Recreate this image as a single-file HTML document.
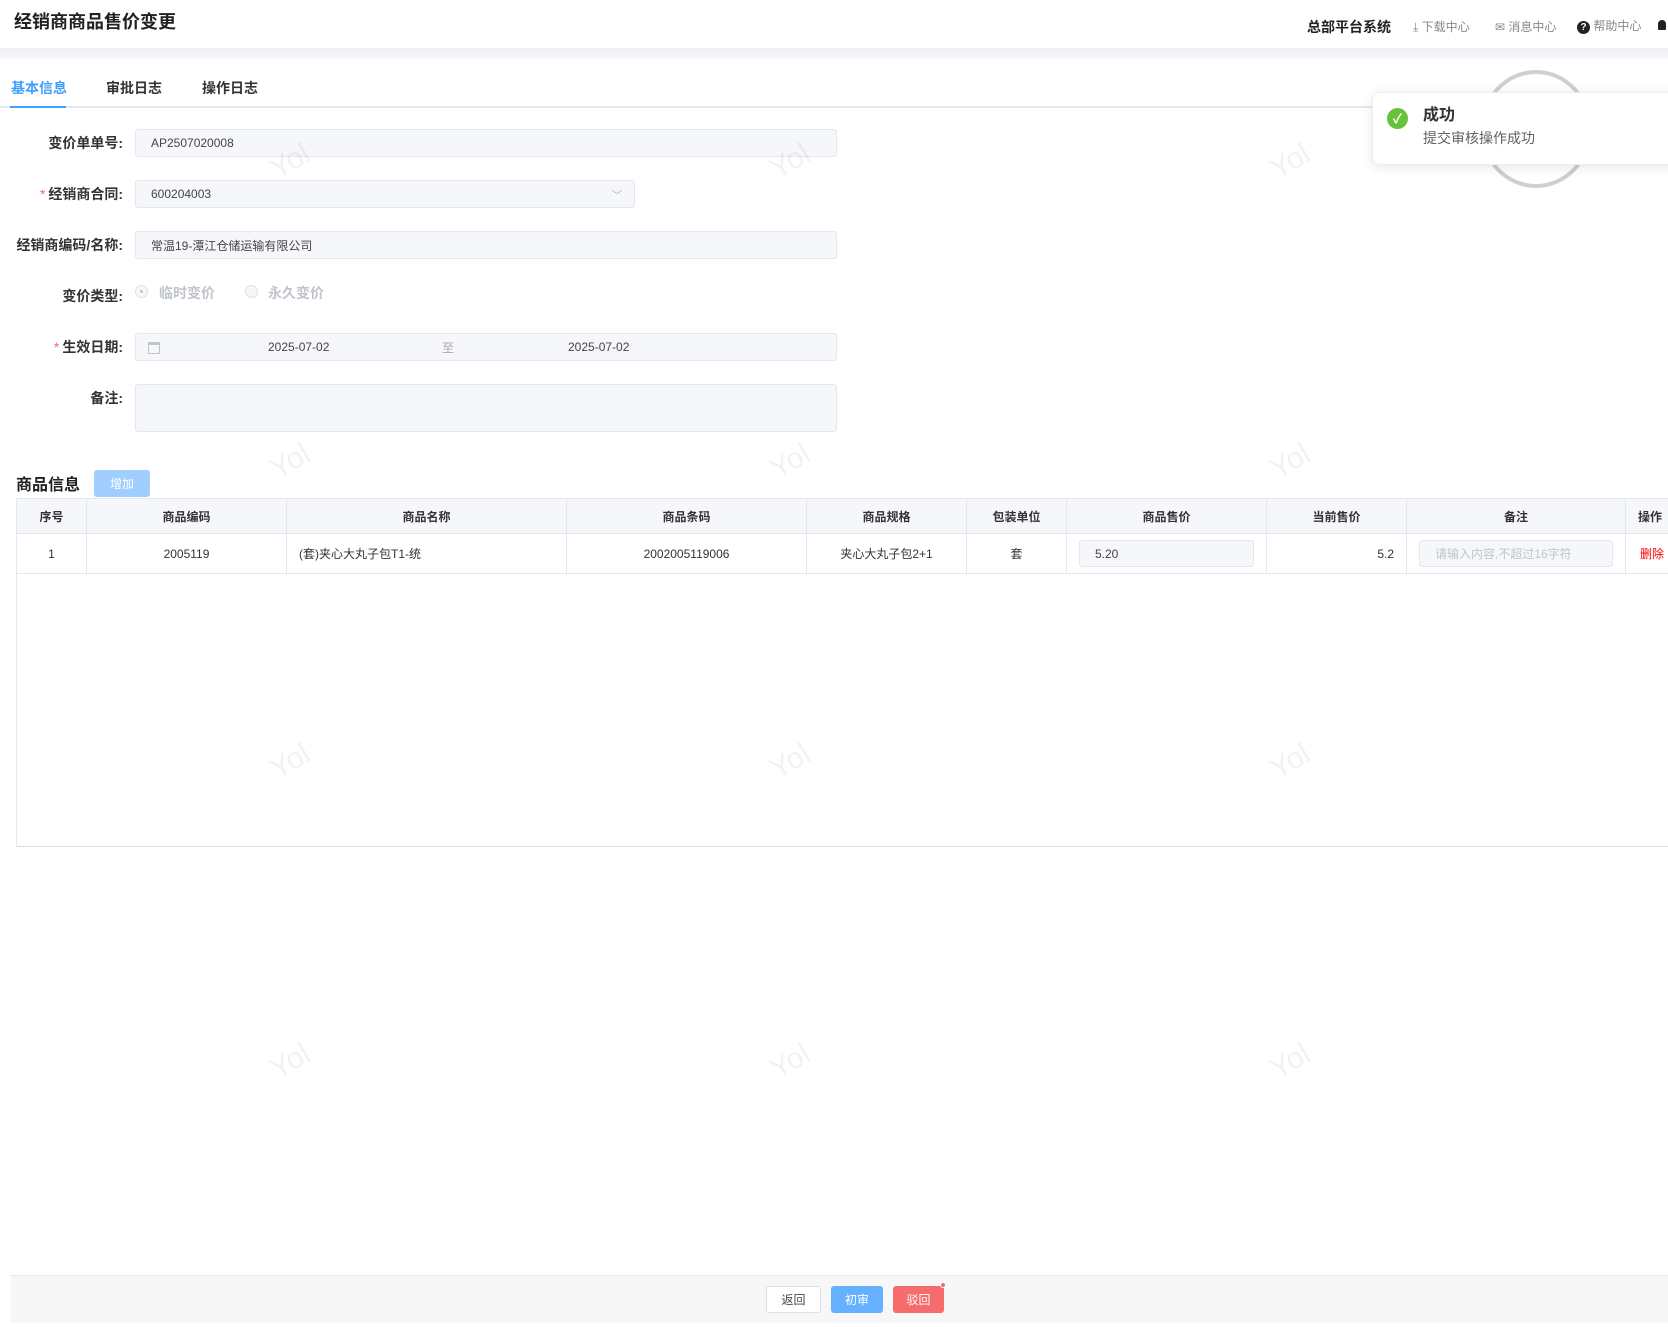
<!DOCTYPE html><html><head><meta charset="utf-8"><style>
*{box-sizing:border-box;margin:0;padding:0}
body{width:1668px;height:1327px;overflow:hidden;background:#fff;font-family:"Liberation Sans","Noto Sans CJK SC",sans-serif;color:#333;position:relative;font-size:13px}
.a{position:absolute}
.title{left:14px;top:8px;font-size:18px;font-weight:bold;color:#222}
.band{left:0;top:48px;width:1668px;height:11px;background:linear-gradient(#eceef1,#f7f8fa)}
.tab{top:78px;font-size:14px;color:#333;font-weight:bold}
.lbl{width:123px;text-align:right;font-size:14px;color:#333;font-weight:bold}
.lbl i{color:#f56c6c;font-style:normal;font-weight:normal;margin-right:3px}
.inp{background:#f5f7fa;border:1px solid #e4e7ed;border-radius:3px;font-size:12px;color:#444;padding-left:15px;display:flex;align-items:center}
.wm{font-size:30px;color:rgba(0,0,0,0.05);transform:rotate(-30deg);font-family:"Liberation Sans",sans-serif}
table{border-collapse:collapse;position:absolute;left:16px;top:498px;font-size:12px}
td,th{border:1px solid #e4e7ed;text-align:center;padding:0}
th{background:#f5f7fa;height:35px;color:#333;font-weight:bold}
td{height:40px;color:#333}
.btn{height:27px;border-radius:3px;font-size:12px;display:flex;align-items:center;justify-content:center;color:#fff}
</style></head><body>
<div class="a title">经销商商品售价变更</div>
<div class="a" style="left:1307px;top:17px;font-size:14px;font-weight:bold;color:#222">总部平台系统</div>
<div class="a" style="left:1413px;top:18px;font-size:12px;color:#888">⤓ 下载中心</div>
<div class="a" style="left:1495px;top:18px;font-size:12px;color:#888">✉ 消息中心</div>
<div class="a" style="left:1577px;top:17px;font-size:12px;color:#888"><span style="display:inline-block;width:13px;height:13px;border-radius:50%;background:#222;color:#fff;font-size:10px;text-align:center;line-height:13px;font-weight:bold">?</span> 帮助中心</div>
<div class="a" style="left:1658px;top:20px;width:8px;height:10px;background:#222;border-radius:4px 4px 1px 1px"></div>
<div class="a band"></div>
<div class="a" style="left:1480px;top:70px;width:112px;height:118px;border:4px solid #cfcfcf;border-radius:50%"></div>
<div class="a tab" style="left:11px;color:#409eff">基本信息</div>
<div class="a tab" style="left:106px">审批日志</div>
<div class="a tab" style="left:202px">操作日志</div>
<div class="a" style="left:0;top:106px;width:1668px;height:2px;background:#e4e7ed"></div>
<div class="a" style="left:10px;top:106px;width:56px;height:2px;background:#409eff"></div>

<div class="a lbl" style="left:0;top:133px">变价单单号:</div>
<div class="a inp" style="left:135px;top:129px;width:702px;height:28px">AP2507020008</div>
<div class="a lbl" style="left:0;top:184px"><i>*</i>经销商合同:</div>
<div class="a inp" style="left:135px;top:180px;width:500px;height:28px">600204003<span style="position:absolute;right:12px;color:#aaa;font-size:10px">﹀</span></div>
<div class="a lbl" style="left:0;top:235px">经销商编码/名称:</div>
<div class="a inp" style="left:135px;top:231px;width:702px;height:28px">常温19-潭江仓储运输有限公司</div>
<div class="a lbl" style="left:0;top:286px">变价类型:</div>
<div class="a" style="left:135px;top:285px;width:13px;height:13px;border:1px solid #dcdfe6;border-radius:50%;background:#f5f7fa"><div style="width:3px;height:3px;background:#c0c4cc;border-radius:50%;margin:4px"></div></div>
<div class="a" style="left:159px;top:283px;font-size:14px;color:#c0c4cc;font-weight:bold">临时变价</div>
<div class="a" style="left:245px;top:285px;width:13px;height:13px;border:1px solid #dcdfe6;border-radius:50%;background:#f5f7fa"></div>
<div class="a" style="left:268px;top:283px;font-size:14px;color:#c0c4cc;font-weight:bold">永久变价</div>
<div class="a lbl" style="left:0;top:337px"><i>*</i>生效日期:</div>
<div class="a inp" style="left:135px;top:333px;width:702px;height:28px"><span style="position:absolute;left:12px;top:8px;width:12px;height:12px;border:1px solid #c0c4cc;border-top-width:3px;border-radius:1px"></span><span style="position:absolute;left:132px">2025-07-02</span><span style="position:absolute;left:306px;color:#aaa">至</span><span style="position:absolute;left:432px">2025-07-02</span></div>
<div class="a lbl" style="left:0;top:388px">备注:</div>
<div class="a inp" style="left:135px;top:384px;width:702px;height:48px"></div>

<div class="a" style="left:16px;top:471px;font-size:16px;font-weight:bold;color:#222">商品信息</div>
<div class="a btn" style="left:94px;top:470px;width:56px;background:#a0cfff">增加</div>
<table style="width:1680px"><tr>
<th style="width:70px">序号</th><th style="width:200px">商品编码</th><th style="width:280px">商品名称</th><th style="width:240px">商品条码</th><th style="width:160px">商品规格</th><th style="width:100px">包装单位</th><th style="width:200px">商品售价</th><th style="width:140px">当前售价</th><th style="width:219px">备注</th><th style="text-align:left;padding-left:12px">操作</th></tr>
<tr><td>1</td><td>2005119</td><td style="text-align:left;padding-left:12px">(套)夹心大丸子包T1-统</td><td>2002005119006</td><td>夹心大丸子包2+1</td><td>套</td>
<td><div class="inp" style="margin:0 12px;height:27px;padding-left:15px">5.20</div></td>
<td style="text-align:right;padding-right:12px">5.2</td>
<td><div class="inp" style="margin:0 12px;height:27px;color:#c0c4cc">请输入内容,不超过16字符</div></td>
<td style="color:#f00;text-align:left;padding-left:14px">删除</td></tr></table>
<div class="a" style="left:16px;top:573px;width:1px;height:274px;background:#e4e7ed"></div>
<div class="a" style="left:16px;top:846px;width:1652px;height:1px;background:#dcdfe6"></div>

<div class="a" style="left:10px;top:1275px;width:1658px;height:48px;background:#f7f7f7;border-top:1px solid #ebebeb"></div>
<div class="a btn" style="left:766px;top:1286px;width:55px;background:#fff;border:1px solid #dcdfe6;color:#444">返回</div>
<div class="a btn" style="left:831px;top:1286px;width:52px;background:#66b1ff">初审</div>
<div class="a btn" style="left:893px;top:1286px;width:51px;background:#f56c6c">驳回</div>
<div class="a" style="left:940px;top:1282px;width:6px;height:6px;border-radius:50%;background:#f56c6c;border:1px solid #fff"></div>

<div class="a" style="left:1372px;top:92px;width:310px;height:73px;background:#fff;border:1px solid #ebeef5;border-radius:8px;box-shadow:0 2px 12px rgba(0,0,0,.1)">
<div class="a" style="left:14px;top:15px;width:21px;height:21px;border-radius:50%;background:#67c23a;color:#fff;font-size:13px;text-align:center;line-height:21px;font-weight:bold">✓</div>
<div class="a" style="left:50px;top:8px;font-size:16px;font-weight:bold;color:#303133">成功</div>
<div class="a" style="left:50px;top:35px;font-size:14px;color:#606266">提交审核操作成功</div>
</div>

<div class="a wm" style="left:270px;top:145px">Yol</div><div class="a wm" style="left:770px;top:145px">Yol</div><div class="a wm" style="left:1270px;top:145px">Yol</div>
<div class="a wm" style="left:270px;top:445px">Yol</div><div class="a wm" style="left:770px;top:445px">Yol</div><div class="a wm" style="left:1270px;top:445px">Yol</div>
<div class="a wm" style="left:270px;top:745px">Yol</div><div class="a wm" style="left:770px;top:745px">Yol</div><div class="a wm" style="left:1270px;top:745px">Yol</div>
<div class="a wm" style="left:270px;top:1045px">Yol</div><div class="a wm" style="left:770px;top:1045px">Yol</div><div class="a wm" style="left:1270px;top:1045px">Yol</div>
</body></html>
